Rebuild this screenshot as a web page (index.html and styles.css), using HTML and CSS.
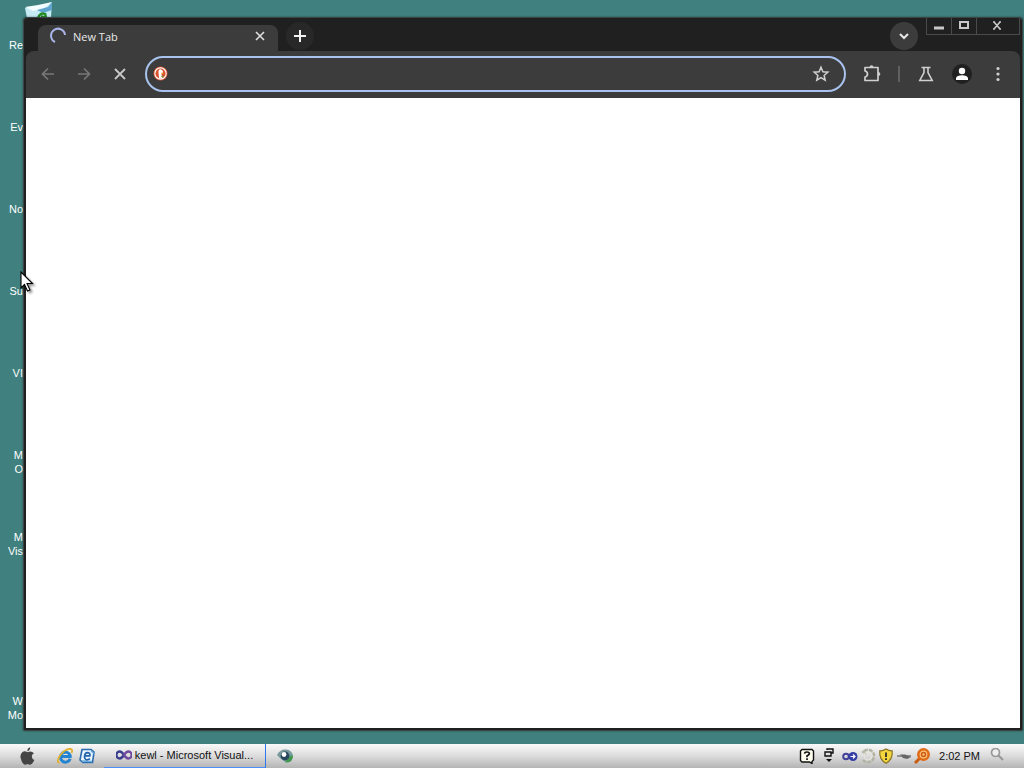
FILE: index.html
```html
<!DOCTYPE html>
<html lang="en">
<head>
    <meta charset="UTF-8">
    <meta name="viewport" content="width=device-width, initial-scale=1.0">
    <title>New Tab</title>
    <link rel="stylesheet" href="styles.css">
</head>
<body>
    <main class="desktop">
        <div class="shortcuts">
            <div class="shortcut">
                <svg class="shortcut-icon" viewBox="0 0 32 32">
                    <path d="M2 6 L12 6 L29 0 L27 31 H7 Z" fill="#c6ebf5"/>
                    <path d="M2 5 L15 3 L29 0 L20 7 L10 9 Z" fill="#f4fdff"/>
                    <path d="M14 8 L25 5 L29 0 L29 8 L20 11 Z" fill="#5fa5cf"/>
                    <path d="M15 16 Q17 10 22 12 M22 11 L23 16 L18 14" fill="none" stroke="#218a22" stroke-width="2.4"/>
                </svg>
                <p>Re</p>
            </div>
            <div class="shortcut"><p>Ev</p></div>
            <div class="shortcut"><p>No</p></div>
            <div class="shortcut"><p>Su</p></div>
            <div class="shortcut"><p>VI</p></div>
            <div class="shortcut"><p>M<br>O</p></div>
            <div class="shortcut"><p>M<br>Vis</p></div>
            <div class="shortcut"></div>
            <div class="shortcut"><p>W<br>Mo</p></div>
        </div>

        <section class="window">
            <header class="titlebar">
                <div class="tab">
                    <svg class="spinner" viewBox="0 0 18 18"><path d="M6 15 A7 7 0 1 1 16 8" fill="none" stroke="#a9b5e6" stroke-width="2"/></svg>
                    <span class="tab-title">New Tab</span>
                    <button class="tab-close" aria-label="Close tab">
                        <svg viewBox="0 0 16 16"><path d="M4 4 L12 12 M12 4 L4 12" stroke="#e0e0e0" stroke-width="1.6"/></svg>
                    </button>
                </div>
                <button class="round new-tab" aria-label="New tab">
                    <svg viewBox="0 0 16 16"><path d="M8 2 V14 M2 8 H14" stroke="#f2f2f2" stroke-width="2"/></svg>
                </button>
                <button class="round tab-search" aria-label="Search tabs">
                    <svg viewBox="0 0 16 16"><path d="M4 6 L8 10 L12 6" fill="none" stroke="#e8e8e8" stroke-width="2"/></svg>
                </button>
                <div class="caption">
                    <button aria-label="Minimize"><svg viewBox="0 0 16 16"><path d="M3 10 H13" stroke="#c8c8c8" stroke-width="3"/></svg></button>
                    <button aria-label="Maximize"><svg viewBox="0 0 16 16"><path d="M4 4 H12 V10 H4 Z" fill="none" stroke="#c8c8c8" stroke-width="2"/></svg></button>
                    <button class="caption-close" aria-label="Close"><svg viewBox="0 0 16 16"><path d="M4 4 L10 11 M10 4 L4 11 M3 4 H5 M9 4 H11 M3 11 H5 M9 11 H11" fill="none" stroke="#c8c8c8" stroke-width="1.6"/></svg></button>
                </div>
            </header>

            <nav class="toolbar">
                <button class="tool" aria-label="Back"><svg viewBox="0 0 20 20"><path d="M16 10 H5 M10 4.5 L4.5 10 L10 15.5" fill="none" stroke="#777777" stroke-width="1.7"/></svg></button>
                <button class="tool" aria-label="Forward"><svg viewBox="0 0 20 20"><path d="M4 10 H15 M10 4.5 L15.5 10 L10 15.5" fill="none" stroke="#777777" stroke-width="1.7"/></svg></button>
                <button class="tool" aria-label="Stop"><svg viewBox="0 0 20 20"><path d="M5 5 L15 15 M15 5 L5 15" stroke="#c8c8c8" stroke-width="1.8"/></svg></button>
                <div class="omnibox">
                    <svg class="engine" viewBox="0 0 16 16">
                        <circle cx="8" cy="8" r="7.5" fill="#d9532f"/>
                        <circle cx="8" cy="8" r="6" fill="#d9532f" stroke="#ffffff" stroke-width="1.2"/>
                        <path d="M6.5 13 L5.8 6 Q6 3.2 8.5 3.6 Q11 4.2 10.4 7 L9 9 L10 13 Z" fill="#ffffff"/>
                        <path d="M8.5 7.2 H12 L9 8.6 Z" fill="#f5b731"/>
                        <path d="M8 11 L11 10.5 V12.5 Z" fill="#58a83c"/>
                    </svg>
                    <input class="address" type="text" aria-label="Address and search bar">
                    <button class="star" aria-label="Bookmark this tab"><svg viewBox="0 0 20 20"><path d="M10 3.2 L11.9 7.8 L16.8 8.2 L13.1 11.4 L14.2 16.2 L10 13.6 L5.8 16.2 L6.9 11.4 L3.2 8.2 L8.1 7.8 Z" fill="none" stroke="#d0d0d0" stroke-width="1.5"/></svg></button>
                </div>
                <div class="tools">
                    <button class="tool" aria-label="Extensions"><svg viewBox="0 0 20 20"><path d="M3 3.5 H16 V16.5 H3 V13 Q5.5 12.5 5.5 10 Q5.5 7.5 3 7 Z" fill="none" stroke="#d0d0d0" stroke-width="1.7" stroke-linejoin="round"/><path d="M7.5 3.5 Q7.5 1.3 9.5 1.3 Q11.5 1.3 11.5 3.5 Z M16 8 Q18.4 8 18.4 10 Q18.4 12 16 12 Z" fill="#d0d0d0"/></svg></button>
                    <span class="divider"></span>
                    <button class="tool" aria-label="Labs"><svg viewBox="0 0 20 20"><path d="M5.5 3.5 H14.5 M8 3.5 V8.5 L3.8 16.5 H16.2 L12 8.5 V3.5" fill="none" stroke="#d0d0d0" stroke-width="1.6"/></svg></button>
                    <button class="tool profile" aria-label="Profile"><svg viewBox="0 0 20 20"><circle cx="10" cy="10" r="10" fill="#202020"/><circle cx="10" cy="7" r="3.2" fill="#ffffff"/><path d="M4 16 V14 Q5 11.2 10 11.2 Q15 11.2 16 14 V16 Z" fill="#ffffff"/></svg></button>
                    <button class="tool" aria-label="Menu"><svg viewBox="0 0 20 20"><g fill="#d0d0d0"><circle cx="10" cy="4.5" r="1.6"/><circle cx="10" cy="10" r="1.6"/><circle cx="10" cy="15.5" r="1.6"/></g></svg></button>
                </div>
            </nav>
            <div class="page"></div>
        </section>

        <svg class="cursor" viewBox="0 0 14 22"><path d="M1 1 V17 L4.5 13.5 L7.5 20 L10 19 L7 12.5 H12.5 Z" fill="#ffffff" stroke="#000000" stroke-width="1.1"/></svg>
    </main>

    <footer class="taskbar">
        <button class="start" aria-label="Start">
            <svg viewBox="0 0 18 20"><path d="M9 6 Q6 4 3.5 6 Q1 8 1.7 12 Q2.8 17 5.5 19 Q7 19.5 9 18.5 Q11 19.5 12.5 19 Q15 17.5 16.3 14.3 Q13.3 13 13.6 10 Q13.8 8 15.8 7 Q13 4 9 6 Z M8.8 5 Q8.5 1.8 11.8 0.8 Q12 4 8.8 5 Z" fill="#444444"/></svg>
        </button>
        <div class="quick">
            <button aria-label="Internet Explorer">
                <svg viewBox="0 0 16 16"><path d="M13.2 10.8 A5 5 0 1 1 13.2 7.5 L13.2 8.5 H4.5" fill="none" stroke="#2484cf" stroke-width="3"/><path d="M2.5 15 Q-1 14 3 7.5 Q9 0 14 1 Q16 2 14.5 5" fill="none" stroke="#e0b02e" stroke-width="1.8"/></svg>
            </button>
            <button aria-label="Outlook Express">
                <svg viewBox="0 0 16 16"><path d="M3 1.5 H12 L15 4 L13.5 14.5 H4 L1 12 Z" fill="#e9f5ff" stroke="#2b6cae" stroke-width="1.6"/><path d="M12 3 L15 5.5 M3 13 L13 13.5" stroke="#67a8dc" stroke-width="1.6"/><path d="M11 10.8 Q6 13.5 5.5 9.2 Q5.6 4.6 8.7 4.6 Q11.6 5 10.8 7.9 H6" fill="none" stroke="#2364a8" stroke-width="1.7"/></svg>
            </button>
        </div>
        <button class="task">
            <svg viewBox="0 0 16 10"><path d="M8 5 C6 2 5 1.5 3.8 1.5 A3.5 3.5 0 0 0 3.8 8.5 C5 8.5 6 8 8 5" fill="none" stroke="#3b3d8f" stroke-width="2.4"/><path d="M8 5 C10 2 11 1.5 12.2 1.5 A3.5 3.5 0 0 1 12.2 8.5 C11 8.5 10 8 8 5" fill="none" stroke="#704a9c" stroke-width="2.4"/></svg>
            <span>kewl - Microsoft Visual...</span>
        </button>
        <button class="eye" aria-label="Viewer">
            <svg viewBox="0 0 16 14"><path d="M0 6 Q3 0 9 0.5 Q15 1 16 7 Q15 13 11 13.5 Q6 13 0 6 Z" fill="#789a9c"/><path d="M8 13.5 Q16 14 16 6 L12 8 Z" fill="#3f9a4c"/><circle cx="8" cy="7" r="4.4" fill="#28465e"/><circle cx="7" cy="5.5" r="2.4" fill="#ffffff"/></svg>
        </button>
        <div class="tray">
            <svg class="tray-icon" viewBox="0 0 16 16"><path d="M3 1.5 H13 L14.5 3 V12 L13 13.5 V15.5 L10.5 14 H3 L1.5 12.5 V3 Z" fill="#fffff0" stroke="#111111" stroke-width="1.4"/><path d="M5.5 5.7 Q5.7 4 8 4 Q10.4 4 10.4 5.7 Q10.3 6.7 8 8 V9.3 M8 10.3 V12" fill="none" stroke="#111111" stroke-width="1.7"/></svg>
            <svg class="tray-small" viewBox="0 0 10 16"><path d="M3 2 V1 H9 V5 H7 M1 4 H7 V8 H1 Z" fill="none" stroke="#111111" stroke-width="1.4"/><path d="M2 11 H8 L5 14 Z" fill="#111111"/></svg>
            <div class="tray-group">
                <svg class="tray-icon" viewBox="0 0 16 16"><circle cx="4" cy="8.5" r="2.8" fill="none" stroke="#42429b" stroke-width="2"/><circle cx="11" cy="8.5" r="4.5" fill="#343ca5"/><path d="M8.5 8.5 H13 M11 6.5 L13 8.5 L11 10.5" fill="none" stroke="#ffffff" stroke-width="1.2"/></svg>
                <svg class="tray-icon" viewBox="0 0 16 16"><path d="M4 3 A6.3 6.3 0 1 1 3 12" fill="none" stroke="#b3b3a3" stroke-width="2.4" stroke-dasharray="4 1"/><path d="M1 4 L6 1 V7 Z" fill="#b9baa9"/><circle cx="8" cy="8" r="4" fill="none" stroke="#e6e6dc"/></svg>
                <svg class="tray-icon" viewBox="0 0 16 16"><path d="M8 1 Q11 3 14.2 2.8 Q15 11.5 8 15.3 Q1 11.5 1.8 2.8 Q5 3 8 1 Z" fill="#f3d63d" stroke="#8b7424" stroke-width="1.2"/><path d="M8 4.5 V9 M8 10.2 V12" stroke="#222222" stroke-width="1.7"/></svg>
                <svg class="tray-icon" viewBox="0 0 16 16"><path d="M1 8 H15" stroke="#777777" stroke-width="1.5"/><path d="M4 6.5 H9 L15 9 L11 11 L7 10 Z" fill="#666666"/></svg>
                <svg class="tray-icon" viewBox="0 0 16 16"><path d="M1 15 L6 10" stroke="#cc5b10" stroke-width="3"/><circle cx="9.5" cy="6.5" r="5.2" fill="#ffc27a" stroke="#e06b16" stroke-width="2.6"/><circle cx="9.5" cy="6.5" r="2" fill="none" stroke="#c85a12" stroke-width="1.5"/></svg>
            </div>
            <time class="clock">2:02 PM</time>
            <button class="spotlight" aria-label="Search">
                <svg viewBox="0 0 16 16"><circle cx="6.5" cy="4.5" r="4" fill="#eeeeee" stroke="#999999" stroke-width="1.7"/><path d="M9.5 7.5 L14 12" stroke="#999999" stroke-width="2.2"/></svg>
            </button>
        </div>
    </footer>
</body>
</html>
```

FILE: styles.css
```css
*{
    box-sizing: border-box;
    margin: 0;
    padding: 0;
}
html{
    height: 100%;
}
body{
    height: 100%;
    display: flex;
    flex-direction: column;
    overflow: hidden;
    background: #40807e;
    font-family: "Liberation Sans", Arial, sans-serif;
    font-size: 11px;
}
button{
    display: flex;
    align-items: center;
    justify-content: center;
    background: none;
    border: none;
    font: inherit;
}
svg{
    display: block;
    flex: none;
}

/* desktop */
.desktop{
    position: relative;
    flex: 1;
    min-height: 0;
    overflow: hidden;
}
.shortcuts{
    display: grid;
    grid-auto-rows: 82px;
    width: 76px;
    padding-top: 2px;
}
.shortcut{
    position: relative;
    padding-top: 36px;
    line-height: 14px;
    color: #ffffff;
}
.shortcut p{
    width: 23px;
    text-align: right;
}
.shortcut-icon{
    position: absolute;
    top: 0;
    left: 23px;
    width: 32px;
    height: 32px;
}
.cursor{
    position: absolute;
    top: 271px;
    left: 20px;
    width: 14px;
    height: 22px;
    filter: drop-shadow(2px 2px 1px rgba(0, 0, 0, 0.4));
}

/* browser window */
.window{
    position: absolute;
    top: 17px;
    right: 1px;
    bottom: 13px;
    left: 23px;
    display: flex;
    flex-direction: column;
    background: #202020;
    border: 1px solid #3a4444;
    border-radius: 4px 4px 2px 2px;
    padding: 0 2px 2px;
    box-shadow: 0 0 2px rgba(0, 0, 0, 0.5);
}
.titlebar{
    display: flex;
    align-items: flex-end;
    height: 33px;
    padding-left: 12px;
}
.tab{
    display: flex;
    align-items: center;
    width: 240px;
    height: 26px;
    padding: 0 10px 4px 11px;
    background: #3c3c3c;
    border-radius: 8px 8px 0 0;
}
.spinner{
    width: 18px;
    height: 18px;
}
.tab-title{
    flex: 1;
    padding-left: 6px;
    font-family: "Open Sans", "Noto Sans", sans-serif;
    font-size: 11px;
    color: #e8e8e8;
}
.tab-close, .tab-close svg{
    width: 16px;
    height: 16px;
}
.round{
    width: 28px;
    height: 28px;
    margin-bottom: 1px;
    border-radius: 50%;
    background: #282828;
}
.round svg{
    width: 16px;
    height: 16px;
}
.new-tab{
    margin-left: 8px;
}
.tab-search{
    margin-left: auto;
    background: #3c3c3c;
}
.caption{
    display: flex;
    align-self: flex-start;
    height: 17px;
    margin-left: 8px;
    border: 1px solid #4a4a4a;
    border-top: none;
}
.caption button{
    width: 25px;
    border-right: 1px solid #4a4a4a;
}
.caption .caption-close{
    width: 42px;
    border-right: none;
}
.caption svg{
    width: 16px;
    height: 16px;
}
.toolbar{
    display: flex;
    align-items: center;
    height: 47px;
    padding: 0 4px 2px;
    background: #3c3c3c;
    border-radius: 8px 8px 0 0;
}
.tool{
    width: 36px;
    height: 36px;
}
.tool svg, .star svg{
    width: 20px;
    height: 20px;
}
.omnibox{
    display: flex;
    align-items: center;
    flex: 1;
    height: 36px;
    margin-left: 7px;
    padding: 0 13px 0 6px;
    border: 2px solid #a9c3ee;
    border-radius: 18px;
}
.engine{
    width: 15px;
    height: 15px;
}
.address{
    flex: 1;
    min-width: 0;
    height: 28px;
    padding: 0 8px;
    border: none;
    outline: none;
    background: none;
    color: #e8e8e8;
    font: inherit;
    font-size: 14px;
}
.tools{
    display: flex;
    align-items: center;
    margin-left: 8px;
}
.divider{
    width: 2px;
    height: 16px;
    margin: 0 8px;
    background: #606060;
}
.page{
    flex: 1;
    background: #ffffff;
}

/* taskbar */
.taskbar{
    display: flex;
    align-items: center;
    height: 24px;
    padding: 0 19px;
    background: linear-gradient(#fafafa, #dcdcdc 50%, #b4b4b4);
    color: #111111;
}
.start svg{
    width: 17px;
    height: 20px;
}
.quick{
    display: flex;
    gap: 6px;
    margin-left: 21px;
}
.quick svg{
    width: 16px;
    height: 16px;
}
.task{
    gap: 3px;
    width: 162px;
    height: 24px;
    margin-left: 9px;
    padding-bottom: 2px;
    border-right: 1px solid #2f78f0;
    border-bottom: 1px solid #4a90f8;
    color: #111111;
    white-space: nowrap;
}
.task svg{
    width: 16px;
    height: 10px;
}
.eye{
    margin-left: 11px;
}
.eye svg{
    width: 16px;
    height: 14px;
}
.tray{
    display: flex;
    align-items: center;
    margin-left: auto;
}
.tray-icon{
    width: 16px;
    height: 16px;
}
.tray-small{
    width: 10px;
    height: 16px;
    margin: 0 8px 0 9px;
}
.tray-group{
    display: flex;
    gap: 2px;
}
.clock{
    margin: 0 9px;
}
.spotlight svg{
    width: 16px;
    height: 16px;
}
```
